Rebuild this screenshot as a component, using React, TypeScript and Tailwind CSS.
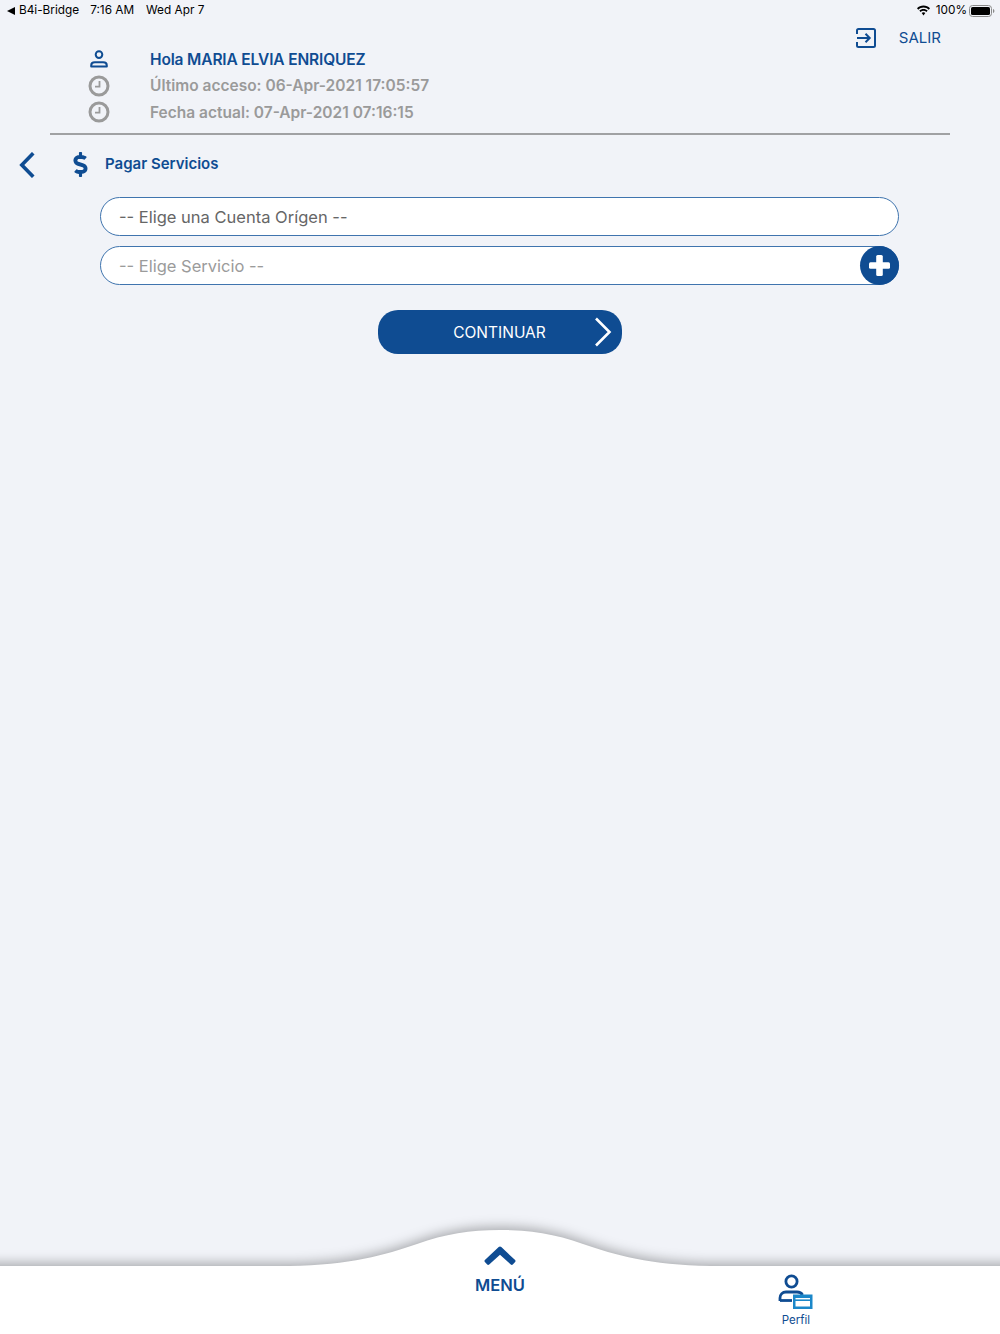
import React from 'react';
import { FaDollarSign } from 'react-icons/fa';

const ClockIcon: React.FC = () => (
  <svg width="22" height="22" viewBox="0 0 22 22" fill="none" stroke="#9a9a9a">
    <circle cx="11" cy="11" r="9" strokeWidth="3" />
    <path d="M11.500 6v5.700H7" strokeWidth="1.800" />
  </svg>
);

const UserIcon: React.FC = () => (
  <svg width="18" height="18" viewBox="0 0 18 18" fill="none" stroke="#0f4c92" strokeWidth="2">
    <circle cx="9" cy="4.600" r="3.300" />
    <path d="M1.200 16.600v-1.200c0-2 1.600-3.200 3.600-3.200h8.400c2 0 3.600 1.200 3.600 3.200v1.200z" strokeLinejoin="round" />
  </svg>
);

const InfoRow: React.FC<{ icon: React.ReactNode; text: string; color: string }> = ({ icon, text, color }) => (
  <div className="flex items-center h-[26.5px]">
    <div className="w-[98px] flex justify-center">{icon}</div>
    <div className="w-[2px]" />
    <span className={`text-[15.500px] font-semibold whitespace-nowrap ${color}`}>{text}</span>
  </div>
);

export default function App() {
  return (
    <div
      className="isolate w-full h-[1334px] bg-[#f1f3f8] flex flex-col overflow-hidden"
      style={{ fontFamily: 'Inter, sans-serif' }}
    >
      {/* status bar */}
      <div className="h-[20px] pl-[7px] pr-[5px] pt-px flex items-center justify-between text-[11.800px] text-black">
        <div className="flex items-center">
          <svg width="8" height="8" viewBox="0 0 8 8" className="mr-[4px]">
            <path d="M0 4L8 0v8z" fill="#000" />
          </svg>
          <span>B4i-Bridge</span>
          <span className="ml-[11px]">7:16 AM</span>
          <span className="ml-[12px]">Wed Apr 7</span>
        </div>
        <div className="flex items-center">
          <svg width="15" height="11" viewBox="0 0 15 11" className="mr-[5px]">
            <path d="M7.500 2.600c2 0 3.800.8 5.200 2.100l1.300-1.400C12.300 1.600 10 .6 7.500.6S2.700 1.600 1 3.300l1.300 1.400C3.700 3.400 5.500 2.600 7.500 2.600z" fill="#000" />
            <path d="M7.500 5.800c1.100 0 2.100.4 2.900 1.200l1.300-1.400C10.600 4.500 9.100 3.900 7.500 3.900S4.400 4.500 3.300 5.600L4.600 7C5.400 6.200 6.400 5.800 7.500 5.800z" fill="#000" />
            <path d="M7.500 7.300c-.7 0-1.300.3-1.800.7l1.800 2.400L9.300 8c-.5-.4-1.100-.7-1.800-.7z" fill="#000" />
          </svg>
          <span>100%</span>
          <svg width="26" height="12" viewBox="0 0 26 12" className="ml-[2px]">
            <rect x="0.500" y="0.500" width="22" height="11" rx="3" fill="none" stroke="#8a8a8a" />
            <rect x="2" y="2" width="19" height="8" rx="1.600" fill="#000" />
            <path d="M24 4v4c.8-.2 1.400-1 1.400-2S24.800 4.200 24 4z" fill="#8a8a8a" />
          </svg>
        </div>
      </div>

      {/* header */}
      <div className="mx-[50px] h-[115px] border-b-2 border-[#a0a1a3] flex justify-between">
        <div className="pt-[26px]">
          <InfoRow icon={<UserIcon />} text="Hola MARIA ELVIA ENRIQUEZ" color="text-[#0f4c92] tracking-[-0.15px]" />
          <InfoRow icon={<ClockIcon />} text="Último acceso: 06-Apr-2021 17:05:57" color="text-[#9a9a9a]" />
          <InfoRow icon={<ClockIcon />} text="Fecha actual: 07-Apr-2021 07:16:15" color="text-[#9a9a9a]" />
        </div>
        <div className="pt-[8px] pr-[9px] flex items-start gap-[23px]">
          <svg width="20" height="20" viewBox="0 0 20 20" fill="none" stroke="#0f4c92" strokeWidth="2">
            <path d="M1 6V2.500C1 1.700 1.700 1 2.500 1h15c.8 0 1.500.7 1.500 1.500v15c0 .8-.7 1.500-1.500 1.500h-15C1.700 19 1 18.300 1 17.500V14" />
            <path d="M1 10h12M9.500 5.800L13.700 10l-4.200 4.200" />
          </svg>
          <span className="text-[15px] leading-[20px] text-[#0f4c92]">SALIR</span>
        </div>
      </div>

      {/* title */}
      <div className="h-[59px] pl-[19px] flex items-center">
        <svg width="16" height="26" viewBox="0 0 16 26" fill="none" stroke="#0f4c92" strokeWidth="3.600" strokeLinecap="square">
          <path d="M13 2.500L2.800 13 13 23.500" />
        </svg>
        <FaDollarSign className="ml-[33px] text-[#0f4c92] text-[25px]" />
        <span className="ml-[12px] text-[15px] font-semibold text-[#0f4c92]">Pagar Servicios</span>
      </div>

      {/* form */}
      <div className="pl-[100px] pr-[101px] pt-[3px] flex flex-col">
        <div className="h-[39px] rounded-full border border-[#3f74ae] bg-white flex items-center pl-[18px] pt-[2px] text-[16.500px] text-[#666666]">
          -- Elige una Cuenta Orígen --
        </div>
        <div className="mt-[10px] h-[39px] rounded-full border border-[#3f74ae] bg-white flex items-center justify-between pl-[18px] text-[16.500px] text-[#9b9b9b]">
          <span className="pt-[2px]">-- Elige Servicio --</span>
          <div className="-mr-px w-[39px] h-[39px] rounded-full bg-[#0f4c92] flex items-center justify-center">
            <svg width="21" height="21" viewBox="0 0 21 21" fill="#fff">
              <rect x="7.200" y="0" width="6.600" height="21" rx="1.500" />
              <rect x="0" y="7.200" width="21" height="6.600" rx="1.500" />
            </svg>
          </div>
        </div>
        <div className="mt-[25px] flex justify-center">
          <div className="relative w-[244px] h-[44px] rounded-[20px] bg-[#0f4c92] flex items-center justify-center pt-px text-[15.500px] text-white">
            CONTINUAR
            <svg width="18" height="30" viewBox="0 0 18 30" fill="none" stroke="#fff" strokeWidth="2.600" className="absolute right-[10px] top-[7px]">
              <path d="M2 1.500L15.500 15 2 28.500" />
            </svg>
          </div>
        </div>
      </div>

      {/* bottom bar */}
      <div className="relative mt-auto h-[68px] bg-white flex">
        <svg
          viewBox="0 0 1000 40"
          className="absolute left-0 bottom-full w-full h-[40px] -z-10 overflow-visible drop-shadow-[0_-3px_6px_rgba(0,0,0,0.3)]"
        >
          <path
            d="M-20 60V40H290C350 39 385 29 417 18C445 8 470 4 500 4C530 4 555 8 583 18C615 29 650 39 710 40H1020V60Z"
            fill="#fff"
          />
        </svg>
        <div className="ml-[406px] w-[188px] -mt-[20px] flex flex-col items-center">
          <svg width="32" height="20" viewBox="0 0 32 20" fill="#0f4c92">
            <path d="M16 .5c.5 0 .9.2 1.300.6l13.800 13c.6.6.6 1.400 0 2l-2.300 2.500c-.6.6-1.500.6-2 0L16 8.800 5.200 18.600c-.6.6-1.400.6-2 0L.9 16.100c-.6-.6-.6-1.400 0-2l13.800-13c.4-.4.8-.6 1.300-.6z" />
          </svg>
          <span className="mt-[7px] text-[16.500px] leading-[24px] font-semibold text-[#0f4c92]">MENÚ</span>
        </div>
        <div className="w-[404px] pt-[8px] flex flex-col items-center">
          <svg width="36" height="36" viewBox="0 0 36 36" fill="none">
            <circle cx="13.500" cy="7.500" r="5.600" stroke="#0f4c92" strokeWidth="2.800" />
            <path d="M2 27v-3c0-3.500 2.500-6 6-6h11c2.500 0 4.500 1 5.500 3" stroke="#0f4c92" strokeWidth="2.800" />
            <path d="M2 26.500h12" stroke="#0f4c92" strokeWidth="2.800" />
            <rect x="15" y="20.500" width="19.500" height="14.500" fill="#1b87c9" />
            <rect x="17.500" y="27" width="14.500" height="5.500" fill="#fff" />
            <rect x="17.500" y="24" width="14.500" height="1.400" fill="#fff" />
          </svg>
          <span className="mt-[2px] text-[11.500px] leading-[16px] text-[#0f4c92]">Perfil</span>
        </div>
      </div>
    </div>
  );
}
